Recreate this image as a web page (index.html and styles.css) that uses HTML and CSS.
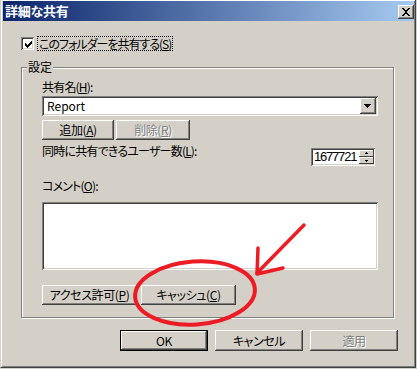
FILE: index.html
```html
<!DOCTYPE html>
<html lang="ja">
<head>
<meta charset="utf-8">
<title>詳細な共有</title>
<link rel="stylesheet" href="styles.css">
</head>
<body>
<div class="window">
  <div class="titlebar">
    <span class="title">詳細な共有</span>
    <span class="close-btn">
      <svg width="16" height="14" viewBox="0 0 16 14" shape-rendering="crispEdges">
        <path d="M4 3h2v1h1v1h2V4h1V3h2v1h-1v1h-1v1h-1v2h1v1h1v1h1v1h-2V10H9V9H7v1H6v1H4v-1h1V9h1V8h1V6H6V5H5V4H4z" fill="#000"/>
      </svg>
    </span>
  </div>
  <div class="body">
    <div class="check-row">
      <span class="checkbox">
        <svg width="9" height="9" viewBox="0 0 9 9" shape-rendering="crispEdges">
          <path d="M1 3h1v1h1v1h1V4h1V3h1V2h1V1h1v3H7v1H6v1H5v1H4v1H3V7H2V6H1z" fill="#000"/>
        </svg>
      </span>
      <span class="check-label">このフォルダーを共有する(<u>S</u>)</span>
    </div>

    <div class="group">
      <span class="legend">設定</span>
      <div class="label">共有名(<u>H</u>):</div>
      <div class="combo">
        <span class="combo-text">Report</span>
        <span class="combo-btn">
          <svg width="16" height="16" viewBox="0 0 16 16" shape-rendering="crispEdges">
            <path d="M4 6h7v1h-1v1H9v1H8v1H7V9H6V8H5V7H4z" fill="#000"/>
          </svg>
        </span>
      </div>
      <div class="btn-row">
        <div class="btn btn-add">追加(<u>A</u>)</div>
        <div class="btn btn-del disabled">削除(<u>R</u>)</div>
      </div>
      <div class="users-row">
        <span class="label">同時に共有できるユーザー数(<u>L</u>):</span>
        <div class="spin">
          <span class="spin-text">1677721</span>
          <span class="spin-btns">
            <span class="spin-btn">
              <svg width="15" height="7" viewBox="0 0 15 7" shape-rendering="crispEdges"><path d="M7 2h1v1h1v1H6V3h1z" fill="#000"/></svg>
            </span>
            <span class="spin-btn">
              <svg width="15" height="7" viewBox="0 0 15 7" shape-rendering="crispEdges"><path d="M6 3h3v1H8v1H7V4H6z" fill="#000"/></svg>
            </span>
          </span>
        </div>
      </div>
      <div class="label label-comment">コメント(<u>O</u>):</div>
      <div class="textarea"></div>
      <div class="btn-row btn-row-bottom">
        <div class="btn btn-wide">アクセス許可(<u>P</u>)</div>
        <div class="btn btn-wide">キャッシュ(<u>C</u>)</div>
      </div>
    </div>

    <div class="dialog-buttons">
      <div class="btn btn-dialog btn-default">OK</div>
      <div class="btn btn-dialog">キャンセル</div>
      <div class="btn btn-dialog disabled">適用</div>
    </div>
  </div>

  <svg class="annot" width="417" height="369" viewBox="0 0 417 369">
    <ellipse cx="194" cy="293" rx="60" ry="31.5" transform="rotate(-4 194 293)" fill="none" stroke="#ED1C24" stroke-width="4"/>
    <path d="M303 225 L256 273" fill="none" stroke="#ED1C24" stroke-width="3.5" stroke-linecap="round"/>
    <path d="M257 248 L256 274 L282 268" fill="none" stroke="#ED1C24" stroke-width="3.5" stroke-linecap="round" stroke-linejoin="round"/>
  </svg>
</div>
</body>
</html>
```

FILE: styles.css
```css
html, body {
  margin: 0;
  padding: 0;
  background: #D4D0C8;
}

body {
  font-family: "Noto Sans CJK JP", sans-serif;
  font-size: 12px;
  color: #000;
  font-feature-settings: "palt";
}

u {
  text-decoration: underline;
  text-underline-offset: 1px;
}

.window {
  position: relative;
  box-sizing: border-box;
  width: 416px;
  height: 368px;
  background: #D4D0C8;
  border-left: 1px solid #D4D0C8;
  border-right: 1px solid #404040;
  border-bottom: 1px solid #404040;
  box-shadow: inset 1px 1px 0 #fff, inset -1px -1px 0 #808080;
  padding: 1px 1px 0 2px;
}

.titlebar {
  height: 20px;
  display: flex;
  align-items: flex-start;
  justify-content: space-between;
  background: linear-gradient(to right, #0A246A, #A6CAF0);
}

.title {
  color: #fff;
  font-weight: bold;
  font-size: 13px;
  line-height: 20px;
  padding-left: 2px;
  font-feature-settings: normal;
  letter-spacing: -0.3px;
}

.close-btn {
  display: block;
  width: 16px;
  height: 14px;
  margin-top: 4px;
  background: #D4D0C8;
  box-shadow: inset -1px -1px 0 #404040, inset 1px 1px 0 #fff, inset -2px -2px 0 #808080;
}

.close-btn svg {
  display: block;
}

.body {
  display: flex;
  flex-direction: column;
}

.check-row {
  display: flex;
  align-items: center;
  margin-top: 15px;
  height: 15px;
  padding-left: 18px;
}

.checkbox {
  display: flex;
  align-items: center;
  justify-content: center;
  box-sizing: border-box;
  width: 13px;
  height: 13px;
  background: #fff;
  box-shadow: inset 1px 1px 0 #808080, inset -1px -1px 0 #fff, inset 2px 2px 0 #404040, inset -2px -2px 0 #D4D0C8;
  padding: 2px 0 0 2px;
}

.checkbox svg {
  display: block;
}

.check-label {
  margin-left: 3px;
  border: 1px dotted #000;
  line-height: 13px;
  padding: 0 1px;
  letter-spacing: -1px;
}

.group {
  position: relative;
  box-sizing: border-box;
  margin-top: 16px;
  margin-left: 18px;
  width: 373px;
  height: 251px;
  border: 1px solid #808080;
  box-shadow: 1px 1px 0 #fff, inset 1px 1px 0 #fff;
  padding: 12px 0 0 20px;
  display: flex;
  flex-direction: column;
}

.legend {
  position: absolute;
  top: -8px;
  left: 5px;
  padding: 0 1px;
  background: #D4D0C8;
  line-height: 14px;
}

.label {
  line-height: 14px;
  letter-spacing: -0.8px;
}

.combo {
  box-sizing: border-box;
  margin-top: 2px;
  width: 336px;
  height: 20px;
  background: #fff;
  box-shadow: inset 1px 1px 0 #808080, inset -1px -1px 0 #fff, inset 2px 2px 0 #404040, inset -2px -2px 0 #D4D0C8;
  display: flex;
  align-items: center;
  justify-content: space-between;
  padding: 2px;
}

.combo-text {
  padding-left: 3px;
  line-height: 16px;
}

.combo-btn {
  display: block;
  width: 16px;
  height: 16px;
  background: #D4D0C8;
  box-shadow: inset -1px -1px 0 #404040, inset 1px 1px 0 #fff, inset -2px -2px 0 #808080;
}

.combo-btn svg {
  display: block;
}

.btn-row {
  display: flex;
  gap: 2px;
  margin-top: 4px;
}

.btn {
  box-sizing: border-box;
  height: 20px;
  display: flex;
  align-items: center;
  justify-content: center;
  background: #D4D0C8;
  box-shadow: inset -1px -1px 0 #404040, inset 1px 1px 0 #fff, inset -2px -2px 0 #808080;
  line-height: 14px;
  letter-spacing: -0.4px;
}

.btn-add {
  width: 72px;
}

.btn-del {
  width: 74px;
}

.disabled {
  color: #808080;
  text-shadow: 1px 1px 0 #fff;
}

.users-row {
  display: flex;
  justify-content: space-between;
  align-items: flex-start;
  width: 333px;
  margin-top: 4px;
}

.spin {
  box-sizing: border-box;
  margin-top: 4px;
  width: 64px;
  height: 18px;
  display: flex;
  background: #fff;
  box-shadow: inset 1px 1px 0 #808080, inset -1px -1px 0 #fff, inset 2px 2px 0 #404040, inset -2px -2px 0 #D4D0C8;
  padding: 2px 1px 2px 2px;
}

.spin-text {
  flex: 1;
  line-height: 14px;
  padding-left: 1px;
  letter-spacing: -1.2px;
  font-size: 13px;
  font-family: "Liberation Sans", sans-serif;
}

.spin-btns {
  display: flex;
  flex-direction: column;
  width: 15px;
}

.spin-btn {
  display: block;
  height: 7px;
  background: #D4D0C8;
  box-shadow: inset -1px -1px 0 #404040, inset 1px 1px 0 #fff;
}

.spin-btn svg {
  display: block;
}

.label-comment {
  margin-top: 13px;
}

.textarea {
  box-sizing: border-box;
  margin-top: 9px;
  width: 336px;
  height: 68px;
  background: #fff;
  box-shadow: inset 1px 1px 0 #808080, inset -1px -1px 0 #fff, inset 2px 2px 0 #404040, inset -2px -2px 0 #D4D0C8;
}

.btn-row-bottom {
  margin-top: 15px;
  gap: 4px;
}

.btn-wide {
  width: 95px;
}

.dialog-buttons {
  display: flex;
  justify-content: flex-end;
  gap: 7px;
  margin-top: 12px;
  padding-right: 16px;
}

.btn-dialog {
  width: 88px;
  height: 21px;
}

.btn-default {
  border: 1px solid #000;
}

.annot {
  position: absolute;
  top: 0;
  left: 0;
  pointer-events: none;
}
```
